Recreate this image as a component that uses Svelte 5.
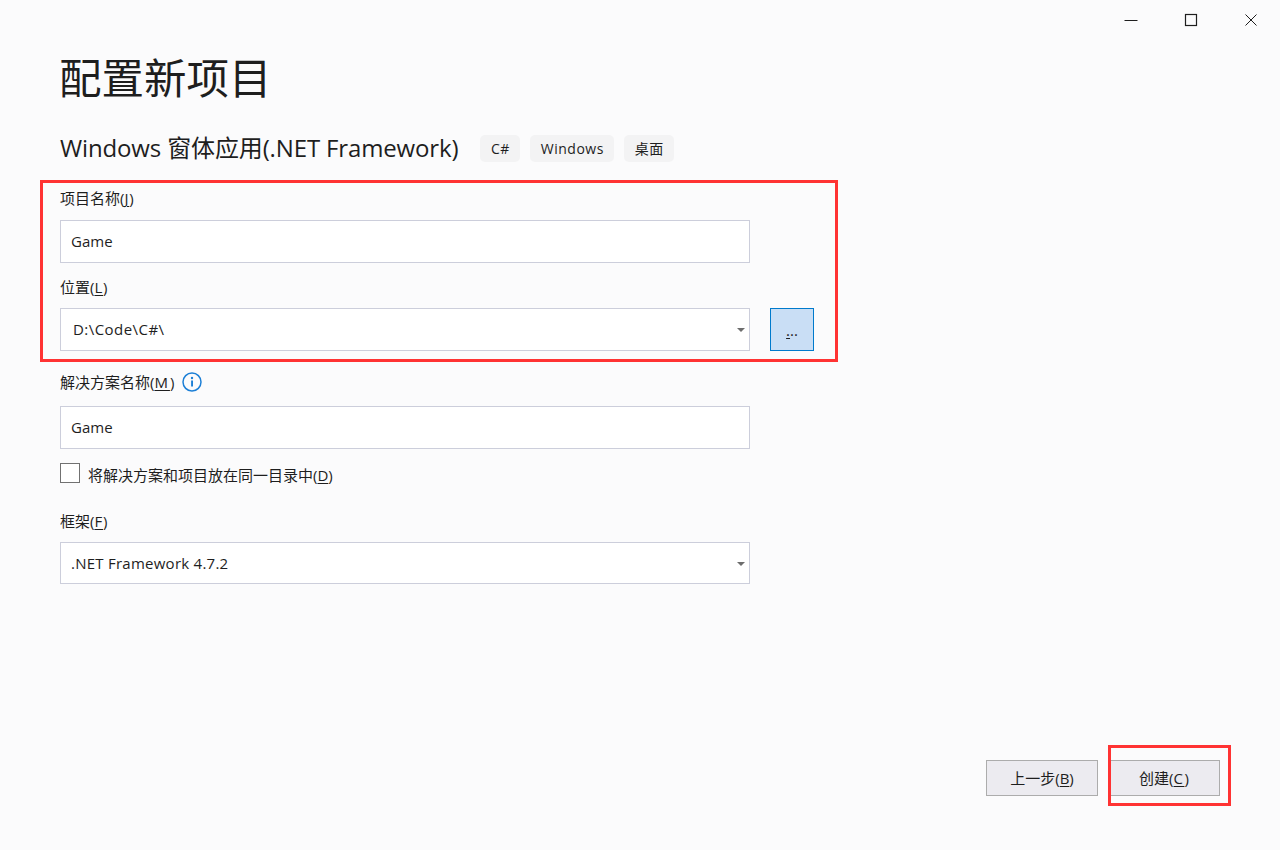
<script>
  const tags = ['C#', 'Windows', '桌面'];
</script>

<div class="window">
  <header class="titlebar">
    <button class="wb" aria-label="最小化">
      <svg width="16" height="16" viewBox="0 0 16 16"><path d="M1.5 8.5h13" stroke="#1e1e1e" stroke-width="1" fill="none"/></svg>
    </button>
    <button class="wb" aria-label="最大化">
      <svg width="16" height="16" viewBox="0 0 16 16"><rect x="2.5" y="2.5" width="11" height="11" stroke="#1e1e1e" stroke-width="1.2" fill="none"/></svg>
    </button>
    <button class="wb" aria-label="关闭">
      <svg width="16" height="16" viewBox="0 0 16 16"><path d="M2.5 2.5l11 11M13.5 2.5l-11 11" stroke="#1e1e1e" stroke-width="1" fill="none"/></svg>
    </button>
  </header>

  <main class="content">
    <h1>配置新项目</h1>
    <div class="subtitle">
      <h2>Windows 窗体应用(.NET Framework)</h2>
      <div class="tags">
        {#each tags as tag}
          <span class="tag">{tag}</span>
        {/each}
      </div>
    </div>

    <div class="form">
      <label class="lbl first" for="name">项目名称(<u>J</u>)</label>
      <input id="name" class="field" value="Game" />

      <label class="lbl loc" for="loc">位置(<u>L</u>)</label>
      <div class="row">
        <div id="loc" class="field select indent">
          <span class="path">D:\Code\C#\</span><i class="caret"></i>
        </div>
        <button class="browse"><u>.</u>..</button>
      </div>

      <div class="lbl sol">
        <span>解决方案名称(<u>M</u>)</span>
        <svg class="info" width="20" height="20" viewBox="0 0 20 20">
          <circle cx="10" cy="10" r="9" fill="none" stroke="#1c7fd6" stroke-width="1.5"/>
          <rect x="9.1" y="8.5" width="1.9" height="6" fill="#1c7fd6"/>
          <circle cx="10" cy="6" r="1.2" fill="#1c7fd6"/>
        </svg>
      </div>
      <input class="field" value="Game" />

      <div class="check">
        <span class="box"></span>
        <span class="check-text">将解决方案和项目放在同一目录中(<u>D</u>)</span>
      </div>

      <div class="lbl fw">框架(<u>F</u>)</div>
      <div class="field select short">
        <span class="fwname">.NET Framework 4.7.2</span><i class="caret"></i>
      </div>
    </div>
  </main>

  <footer class="footer">
    <button class="btn">上一步(<u>B</u>)</button>
    <button class="btn">创建(<u>C</u>)</button>
  </footer>

  <div class="mark mark-form"></div>
  <div class="mark mark-create"></div>
</div>

<style>
  :global(body) {
    margin: 0;
    background: #fbfbfc;
  }
  .window {
    position: relative;
    width: 1280px;
    height: 850px;
    display: flex;
    flex-direction: column;
    overflow: hidden;
    background: #fbfbfc;
    color: #1e1e1e;
    font-family: "Open Sans", "Noto Sans CJK SC", sans-serif;
    font-size: 15px;
  }
  u {
    text-underline-offset: 2px;
  }
  .titlebar {
    display: flex;
    justify-content: flex-end;
    height: 40px;
  }
  .wb {
    width: 60px;
    height: 40px;
    padding: 0 0 0 2px;
    border: 0;
    background: none;
    display: flex;
    align-items: center;
    justify-content: center;
  }
  .content {
    padding-left: 60px;
  }
  h1 {
    margin: 7px 0 0 -1px;
    font-size: 42.5px;
    font-weight: 400;
    line-height: 58px;
    font-family: "Noto Sans CJK SC", sans-serif;
  }
  .subtitle {
    display: flex;
    align-items: center;
    margin-top: 30px;
    height: 27px;
  }
  h2 {
    margin: 0 0 2px;
    font-size: 24px;
    font-weight: 400;
    line-height: 27px;
    letter-spacing: -0.14px;
    white-space: nowrap;
  }
  .tags {
    display: flex;
    gap: 10px;
    margin-left: 22px;
  }
  .tag {
    height: 27px;
    padding: 0 10.5px;
    line-height: 27px;
    font-size: 14px;
    letter-spacing: 0.5px;
    background: #f3f3f4;
    border-radius: 5px;
  }
  .form {
    margin-top: 25px;
  }
  .lbl {
    display: flex;
    align-items: center;
    height: 22px;
    line-height: 22px;
    white-space: pre;
  }
  .lbl u {
    letter-spacing: 0.8px;
  }
  .lbl.loc { margin-top: 13px; }
  .lbl.sol { margin-top: 19px; height: 24px; gap: 8px; }
  .lbl.sol u { letter-spacing: 2px; }
  .lbl.fw { margin-top: 27px; }
  .field {
    display: flex;
    align-items: center;
    box-sizing: border-box;
    width: 690px;
    height: 43px;
    margin-top: 12px;
    padding: 0 10px 2px;
    background: #fff;
    border: 1px solid #cccedb;
    border-radius: 0;
    color: #1e1e1e;
    font: inherit;
    outline: none;
  }
  input.field {
    display: block;
  }
  .lbl.first + .field { margin-top: 11px; }
  .select {
    justify-content: space-between;
    padding-right: 4px;
  }
  .indent {
    padding-left: 12px;
    margin-top: 0;
  }
  .path {
    letter-spacing: 0.45px;
  }
  .fwname {
    letter-spacing: 0.25px;
  }
  .short {
    height: 42px;
    margin-top: 10px;
    padding-bottom: 0;
  }
  .caret {
    width: 0;
    height: 0;
    margin-top: 2px;
    border-left: 4px solid transparent;
    border-right: 4px solid transparent;
    border-top: 4px solid #6d6d6d;
  }
  .row {
    display: flex;
    gap: 20px;
    margin-top: 10px;
  }
  .browse {
    box-sizing: border-box;
    width: 44px;
    height: 43px;
    padding: 0;
    background: #c9def5;
    border: 1px solid #007acc;
    color: #1e1e1e;
    font: inherit;
  }
  .check {
    display: flex;
    align-items: center;
    gap: 8px;
    margin-top: 14px;
    height: 20px;
    white-space: pre;
  }
  .check-text {
    padding-top: 2px;
  }
  .box {
    box-sizing: border-box;
    width: 20px;
    height: 20px;
    background: #fff;
    border: 1px solid #717171;
  }
  .footer {
    margin-top: auto;
    display: flex;
    justify-content: flex-end;
    gap: 12px;
    padding: 0 60px 54px 0;
  }
  .btn {
    box-sizing: border-box;
    width: 112px;
    height: 36px;
    padding: 0 0 2px;
    background: #ecebf0;
    border: 1px solid #acacac;
    color: #1e1e1e;
    font: inherit;
  }
  .btn + .btn {
    width: 110px;
    padding-right: 2px;
  }
  .btn + .btn u {
    letter-spacing: 1.5px;
  }
  .mark {
    position: absolute;
    box-sizing: border-box;
    border: 3px solid #ff3333;
    pointer-events: none;
  }
  .mark-form {
    left: 40px;
    top: 180px;
    width: 798px;
    height: 182px;
  }
  .mark-create {
    left: 1108px;
    top: 745px;
    width: 123px;
    height: 61px;
  }
</style>
